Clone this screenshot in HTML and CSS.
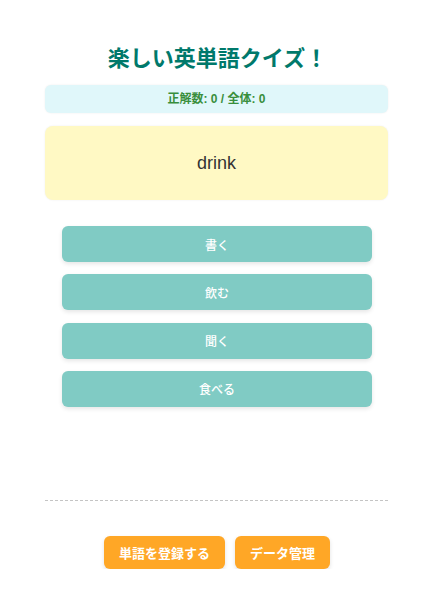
FILE: index.html
```html
<!DOCTYPE html>
<html lang="ja">
<head>
<meta charset="utf-8">
<title>楽しい英単語クイズ！</title>
<link rel="stylesheet" href="styles.css">
</head>
<body>
<div class="app">
  <h1 class="title">楽しい英単語クイズ！</h1>
  <div class="score">正解数: 0 / 全体: 0</div>
  <div class="word">drink</div>
  <div class="choices">
    <button class="choice">書く</button>
    <button class="choice">飲む</button>
    <button class="choice">聞く</button>
    <button class="choice">食べる</button>
  </div>
  <hr class="divider">
  <div class="actions">
    <button class="action">単語を登録する</button>
    <button class="action">データ管理</button>
  </div>
</div>
</body>
</html>
```

FILE: styles.css
```css
html, body {
  margin: 0;
  padding: 0;
  background: #ffffff;
}

body {
  font-family: "Liberation Sans", "Noto Sans CJK JP", sans-serif;
}

.app {
  width: 343px;
  margin-left: 45px;
  padding-top: 41px;
  display: flex;
  flex-direction: column;
}

.title {
  margin: 0;
  font-family: "Noto Sans CJK JP", sans-serif;
  font-size: 22px;
  line-height: 30px;
  font-weight: 700;
  color: #00796b;
  text-align: center;
  padding-left: 2px;
}

.score {
  margin-top: 14px;
  height: 28px;
  line-height: 29px;
  background: #e0f7fa;
  border-radius: 6px;
  box-shadow: 0 0 2px rgba(0, 0, 0, 0.08);
  text-align: center;
  font-size: 12px;
  font-weight: 700;
  color: #388e3c;
}

.word {
  margin-top: 13px;
  height: 74px;
  line-height: 74px;
  background: #fff9c4;
  border-radius: 8px;
  box-shadow: 0 0 2px rgba(0, 0, 0, 0.08);
  text-align: center;
  font-size: 18px;
  color: #333333;
}

.choices {
  margin-top: 26px;
  display: flex;
  flex-direction: column;
  gap: 12.3px;
  align-items: center;
}

.choice {
  width: 310px;
  height: 36px;
  margin-left: 1px;
  border: none;
  border-radius: 6px;
  background: #80cbc4;
  color: #ffffff;
  font-family: "Noto Sans CJK JP", sans-serif;
  font-size: 12px;
  font-weight: 500;
  box-shadow: 0 2px 4px rgba(0, 0, 0, 0.1);
  padding: 0;
}

.divider {
  margin: 93px 0 0 0;
  border: none;
  border-top: 1px dashed #c4c4c4;
  height: 0;
}

.actions {
  margin-top: 35px;
  display: flex;
  justify-content: center;
  gap: 10px;
  padding-left: 1px;
}

.action {
  height: 33px;
  padding: 0 15px;
  border: none;
  border-radius: 6px;
  background: #ffa726;
  color: #ffffff;
  font-family: "Noto Sans CJK JP", sans-serif;
  font-size: 13px;
  font-weight: 700;
  box-shadow: 0 2px 4px rgba(0, 0, 0, 0.12);
}
```
